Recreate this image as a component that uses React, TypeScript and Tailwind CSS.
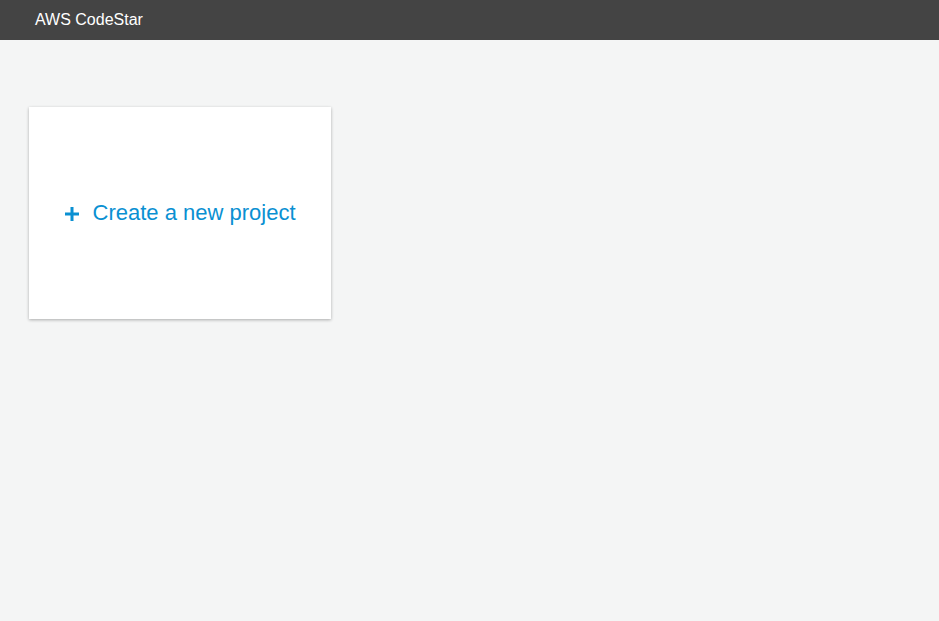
export default function App() {
  return (
    <div className="min-h-[621px] bg-[#f4f5f5] font-['Liberation_Sans',Arial,sans-serif]">
      <header className="h-10 bg-[#444444] flex items-center pl-[35px]">
        <span className="text-white text-[16px] leading-none">AWS CodeStar</span>
      </header>
      <main className="pt-[67px] pl-[29px]">
        <button className="w-[302px] h-[212px] bg-white shadow-[0_1px_3px_rgba(0,0,0,0.3)] flex items-center justify-center gap-[14px] text-[#0a90d2]">
          <svg width="14" height="14" viewBox="0 0 14 14" className="mt-[1px]">
            <rect x="5.5" y="0" width="3" height="14" fill="currentColor" />
            <rect x="0" y="5.5" width="14" height="3" fill="currentColor" />
          </svg>
          <span className="text-[22px] leading-none">Create a new project</span>
        </button>
      </main>
    </div>
  );
}
